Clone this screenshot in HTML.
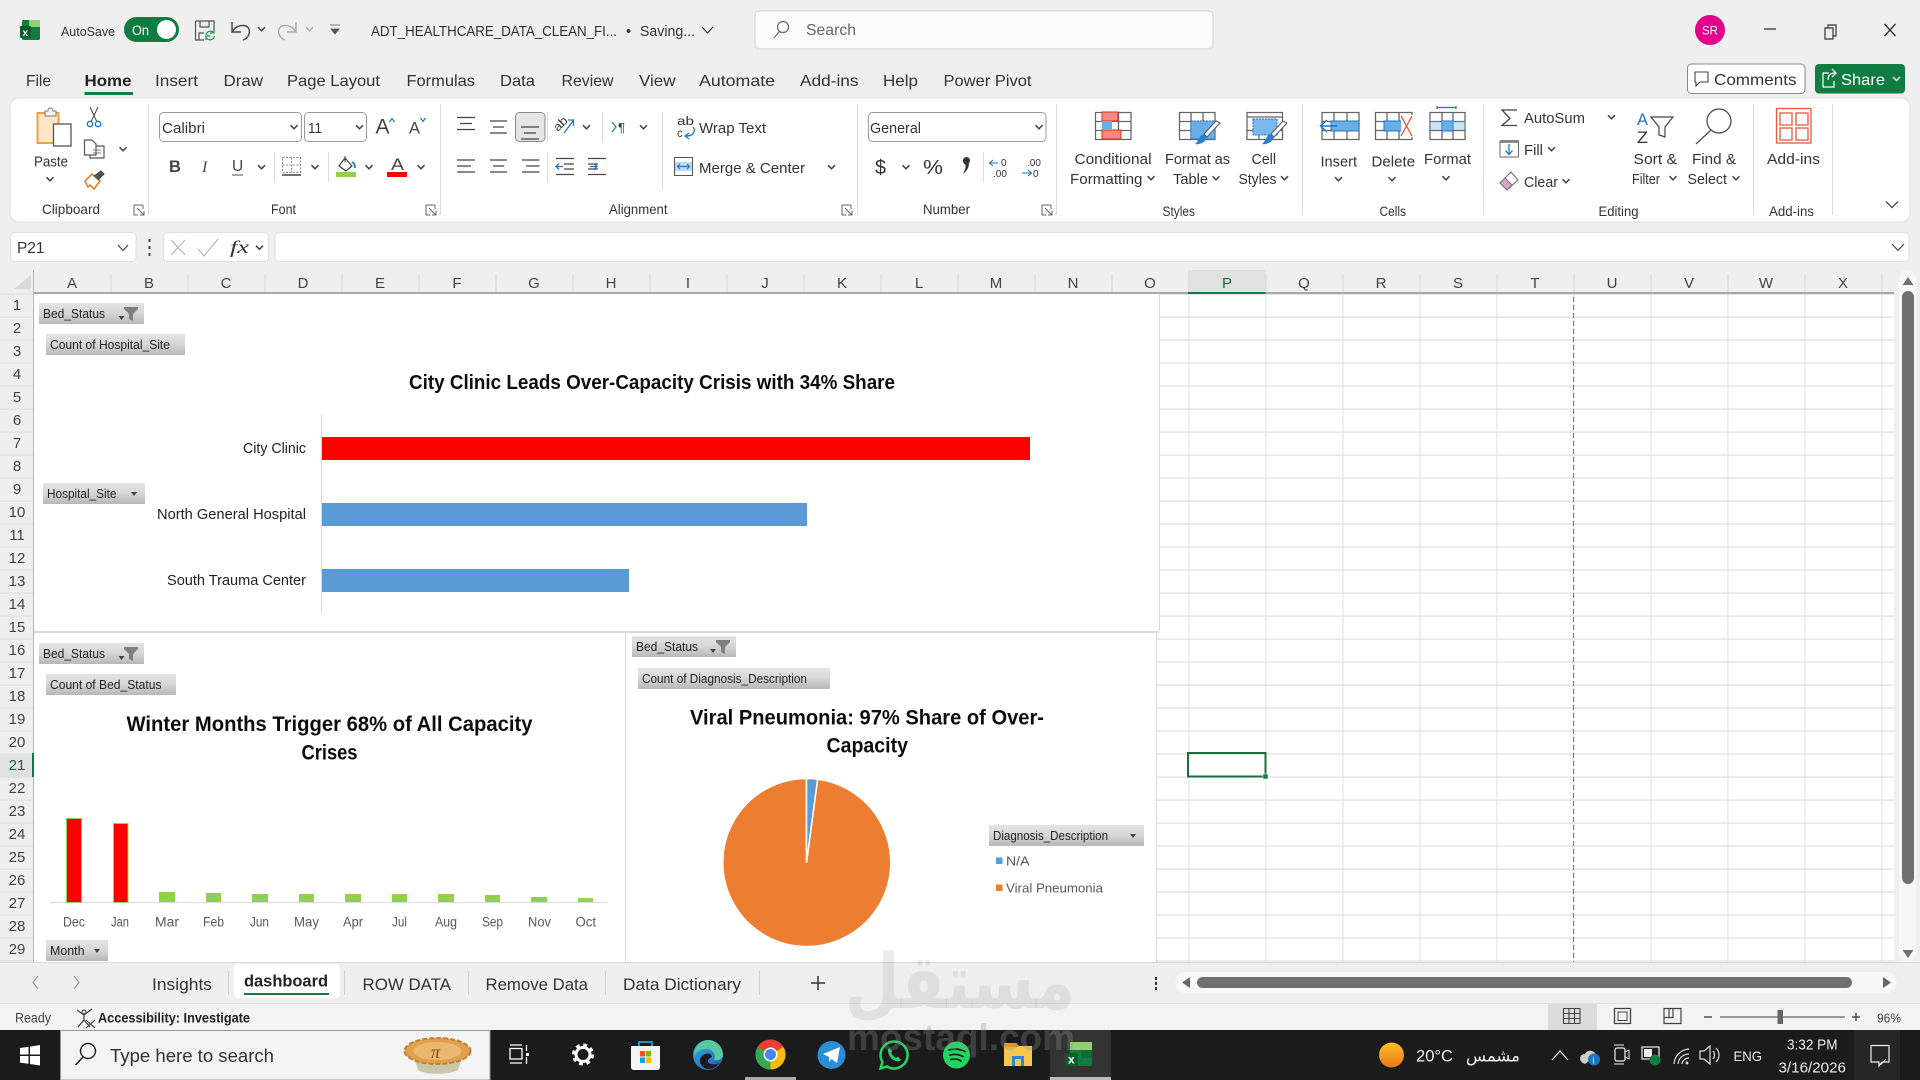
<!DOCTYPE html>
<html lang="en"><head><meta charset="utf-8"><title>Excel dashboard</title>
<style>
html,body{margin:0;padding:0;background:#efefef;width:1920px;height:1080px;overflow:hidden}
svg{display:block}
text{font-family:"Liberation Sans","DejaVu Sans",sans-serif;fill:#333;white-space:pre}
.ic{fill:none;stroke:#555;stroke-width:1.3}
</style></head><body>
<svg width="1920" height="1080" viewBox="0 0 1920 1080" xmlns="http://www.w3.org/2000/svg">
<defs>
<path id="ch" d="M-3.5 -1.8L0 1.8L3.5 -1.8" fill="none" stroke="#444" stroke-width="1.5"/>
<path id="launch" d="M-5 -5H4M-5 -5V5M-5 5H-1M4 -5V-1M-2 -2L5 5M5 1V5H1" fill="none" stroke="#666" stroke-width="1"/>
<linearGradient id="g" x1="0" y1="0" x2="0" y2="1"><stop offset="0" stop-color="#e4e4e4"/><stop offset=".45" stop-color="#d8d8d8"/><stop offset="1" stop-color="#b8b8b8"/></linearGradient>
<linearGradient id="sun" x1="0" y1="0" x2="0" y2="1"><stop offset="0" stop-color="#fbbf24"/><stop offset="1" stop-color="#e8791c"/></linearGradient>
<linearGradient id="edge" x1="0" y1="0" x2="1" y2="1"><stop offset="0" stop-color="#2ea8d8"/><stop offset=".6" stop-color="#2a7fc9"/><stop offset="1" stop-color="#1a4f9c"/></linearGradient>
<pattern id="hl" x="0" y="293.5" width="20" height="23" patternUnits="userSpaceOnUse"><rect width="20" height="1.2" fill="#dddddd"/></pattern>
<pattern id="vl" x="33.4" y="0" width="77" height="20" patternUnits="userSpaceOnUse"><rect width="1" height="20" fill="#e0e0e0"/></pattern>
<path id="fun" d="M0 0H14V2L9 7V14L5 12V7L0 2Z" fill="#808080"/>
<path id="car" d="M-3 -2H3L0 2Z" fill="#444"/>
</defs>

<rect width="1920" height="1080" fill="#efefef"/>

<!-- TITLE BAR -->
<rect x="22" y="20" width="18" height="20" rx="1.5" fill="#107c41"/><rect x="29" y="20" width="11" height="7" fill="#8fd16f"/><rect x="20" y="26" width="11" height="12" rx="1" fill="#0b5d2e"/>
<text x="22.5" y="36" font-size="10" font-weight="bold" style="fill:#fff">x</text>
<text x="61" y="36" font-size="13" textLength="54" lengthAdjust="spacingAndGlyphs">AutoSave</text>
<rect x="124" y="17" width="55" height="25" rx="12.5" fill="#107c41"/><text x="132" y="35" font-size="13.5" style="fill:#fff" textLength="17" lengthAdjust="spacingAndGlyphs">On</text><circle cx="166.5" cy="29.5" r="9.5" fill="#fff"/>
<path d="M195.5 21H214V30M195.5 21V40H204M200 21V27H209V21M199 40V33H204" fill="none" stroke="#555" stroke-width="1.2"/><path d="M206 35a4.500 4.500 0 0 1 8-2M214.500 36a4.500 4.500 0 0 1-8 2M214 29v4h-4M206 40v-4h4" fill="none" stroke="#2c9a5b" stroke-width="1.3"/>
<path d="M232 22V32H241M232 32C238 22 252 24 249 34C248 37 246 39 243 40" fill="none" stroke="#444" stroke-width="1.4"/>
<use href="#ch" x="261.500" y="29"/>
<path d="M296 22V32H287M296 32C290 22 276 24 279 34C280 37 282 39 285 40" fill="none" stroke="#aaa" stroke-width="1.4"/>
<use href="#ch" x="309.500" y="29" opacity=".4"/>
<path d="M330 25H340M331 29H339L335 34Z" fill="#555" stroke="#555" stroke-width=".8"/>
<g font-size="14.500">
<text x="371" y="36" textLength="246" lengthAdjust="spacingAndGlyphs">ADT_HEALTHCARE_DATA_CLEAN_FI...</text>
<text x="626" y="36" style="fill:#333">•</text>
<text x="640" y="36" textLength="55" lengthAdjust="spacingAndGlyphs">Saving...</text>
</g>
<path d="M702 27L707.500 33L713 27" fill="none" stroke="#333" stroke-width="1.2"/>
<rect x="755" y="11" width="458" height="38" rx="4" fill="#fbfbfb" stroke="#dcdcdc" stroke-width="1.500"/>
<circle cx="783" cy="27" r="5.500" fill="none" stroke="#666" stroke-width="1.200"/><path d="M779.500 31.500L774 38" stroke="#666" stroke-width="1.200"/>
<text x="806" y="35" font-size="16" style="fill:#666" textLength="50" lengthAdjust="spacingAndGlyphs">Search</text>
<circle cx="1710" cy="30" r="15" fill="#e3008c"/><text x="1710" y="34.500" font-size="11.500" text-anchor="middle" style="fill:#fff">SR</text>
<path d="M1764 29H1776" stroke="#333" stroke-width="1.300"/>
<path d="M1825 28H1833V39H1825ZM1828 28V25H1836V36H1833" fill="none" stroke="#333" stroke-width="1.200"/>
<path d="M1884.500 24L1895.500 36M1895.500 24L1884.500 36" stroke="#333" stroke-width="1.300"/>

<!-- MENU TABS -->
<g font-size="16">
<text x="26" y="86" textLength="25" lengthAdjust="spacingAndGlyphs">File</text>
<text x="84.500" y="86" font-weight="bold" style="fill:#222" textLength="47" lengthAdjust="spacingAndGlyphs">Home</text>
<text x="155" y="86" textLength="43" lengthAdjust="spacingAndGlyphs">Insert</text>
<text x="223.500" y="86" textLength="39.500" lengthAdjust="spacingAndGlyphs">Draw</text>
<text x="287" y="86" textLength="93" lengthAdjust="spacingAndGlyphs">Page Layout</text>
<text x="406.500" y="86" textLength="68.500" lengthAdjust="spacingAndGlyphs">Formulas</text>
<text x="500" y="86" textLength="35" lengthAdjust="spacingAndGlyphs">Data</text>
<text x="561.500" y="86" textLength="52" lengthAdjust="spacingAndGlyphs">Review</text>
<text x="639" y="86" textLength="36.500" lengthAdjust="spacingAndGlyphs">View</text>
<text x="699" y="86" textLength="76" lengthAdjust="spacingAndGlyphs">Automate</text>
<text x="800" y="86" textLength="58.500" lengthAdjust="spacingAndGlyphs">Add-ins</text>
<text x="883" y="86" textLength="35" lengthAdjust="spacingAndGlyphs">Help</text>
<text x="943.500" y="86" textLength="88" lengthAdjust="spacingAndGlyphs">Power Pivot</text>
</g>
<rect x="84.500" y="92" width="48.500" height="3" fill="#107c41"/>
<rect x="1687.500" y="64" width="117.500" height="29.500" rx="4" fill="#fff" stroke="#8a8a8a"/>
<path d="M1695 72H1708V82H1700L1696 86V82H1695Z" fill="none" stroke="#444" stroke-width="1.100"/>
<text x="1714" y="85" font-size="16" textLength="82.500" lengthAdjust="spacingAndGlyphs">Comments</text>
<rect x="1815" y="64" width="90" height="29.500" rx="4" fill="#107c41"/>
<path d="M1829 73H1823V87H1834V81M1828 80C1828 75 1831 73 1835 73M1832 69L1836 73L1832 77" fill="none" stroke="#fff" stroke-width="1.200"/>
<text x="1841" y="85" font-size="16" style="fill:#fff" textLength="44" lengthAdjust="spacingAndGlyphs">Share</text>
<path d="M1893 77L1896.500 80.500L1900 77" fill="none" stroke="#fff" stroke-width="1.300"/>

<!-- RIBBON -->
<rect x="10" y="98" width="1900" height="124" rx="9" fill="#fff" stroke="#e2e2e2"/>
<g stroke="#dcdcdc" stroke-width="1"><path d="M148.500 104V215M440.500 104V215M857.500 104V215M1056.500 104V215M1302.500 104V215M1483.500 104V215M1753.500 104V215M1832.500 104V215M274.500 152V182M328.500 152V182M547.500 152V182M602.500 112V142M662.500 112V190M983.500 152V182M547.500 112V142"/></g>

<!-- clipboard -->
<rect x="37.500" y="113" width="21" height="30" fill="#fde7c6" stroke="#eda23a" stroke-width="2"/>
<path d="M45 114V111H48C48 107 53 107 53 111H56V116H45Z" fill="#f4f4f4" stroke="#777"/>
<rect x="53.500" y="124" width="17.500" height="22" fill="#fff" stroke="#555" stroke-width="1.300"/>
<text x="34" y="166.500" font-size="15" textLength="34" lengthAdjust="spacingAndGlyphs">Paste</text>
<use href="#ch" x="50" y="179"/>
<path d="M90 107L97 122M98 107L91 122" stroke="#444" stroke-width="1"/><circle cx="90" cy="124" r="2.700" fill="none" stroke="#1e74c4" stroke-width="1.300"/><circle cx="98" cy="124" r="2.700" fill="none" stroke="#1e74c4" stroke-width="1.300"/>
<path d="M84.500 140H92L96 144V155H84.500ZM96 146H104V158H90V155" fill="#fff" stroke="#555" stroke-width="1.200"/><path d="M93 150H101M93 153H101" stroke="#777"/>
<use href="#ch" x="123" y="149"/>
<path d="M85 181L92 174L100 181L94 189L90 185L88 187Z" fill="#fff" stroke="#e07a1f" stroke-width="1.500"/><path d="M94 176L101 171L104 174L98 180" fill="#555" stroke="#444"/>
<text x="42" y="214" font-size="14" textLength="58" lengthAdjust="spacingAndGlyphs">Clipboard</text>
<use href="#launch" x="139" y="210"/>

<!-- font -->
<rect x="159.500" y="112.500" width="142" height="29" rx="4" fill="#fff" stroke="#9a9a9a"/>
<text x="162" y="133" font-size="15" textLength="43" lengthAdjust="spacingAndGlyphs">Calibri</text><use href="#ch" x="294" y="127"/>
<rect x="304.500" y="112.500" width="62" height="29" rx="4" fill="#fff" stroke="#9a9a9a"/>
<text x="308" y="133" font-size="15" textLength="14" lengthAdjust="spacingAndGlyphs">11</text><use href="#ch" x="359.500" y="127"/>
<text x="375.500" y="133.500" font-size="21" style="fill:#444" textLength="14" lengthAdjust="spacingAndGlyphs">A</text><path d="M389.500 122L392 118.500L394.500 122" fill="none" stroke="#1e74c4" stroke-width="1.200"/>
<text x="409" y="133.500" font-size="17" style="fill:#444" textLength="11" lengthAdjust="spacingAndGlyphs">A</text><path d="M420.500 118L423 121.500L425.500 118" fill="none" stroke="#1e74c4" stroke-width="1.200"/>
<text x="169" y="172" font-size="16.500" font-weight="bold" style="fill:#444">B</text>
<text x="202" y="172" font-size="16" font-style="italic" style="font-family:'Liberation Serif',serif;fill:#444">I</text>
<text x="232" y="171" font-size="15.500" style="fill:#444">U</text><path d="M232 175H243" stroke="#777" stroke-width="1.300"/>
<use href="#ch" x="261.500" y="167"/>
<path d="M282.500 157.500H300.500V172.500H282.500ZM291.500 157.500V172.500M282.500 165H300.500" fill="none" stroke="#888" stroke-dasharray="2 1.500"/><path d="M282 175H301" stroke="#444" stroke-width="1.500"/>
<use href="#ch" x="315" y="167"/>
<path d="M339 166L345 158L352 166L346 171Z" fill="#fff" stroke="#444" stroke-width="1.200"/><path d="M345 156V162" fill="none" stroke="#444"/><path d="M352 162C354 163 355 165 355 168" fill="none" stroke="#1e74c4" stroke-width="1.800"/>
<rect x="336" y="172" width="20" height="5" fill="#92d050"/>
<use href="#ch" x="369" y="167"/>
<text x="391" y="170" font-size="17" style="fill:#444" textLength="13" lengthAdjust="spacingAndGlyphs">A</text><rect x="387" y="172" width="20" height="5" fill="#f00"/>
<use href="#ch" x="421" y="167"/>
<text x="271" y="214" font-size="14" textLength="25" lengthAdjust="spacingAndGlyphs">Font</text>
<use href="#launch" x="431" y="210"/>

<!-- alignment -->
<rect x="515.500" y="112.500" width="29.500" height="29" rx="4" fill="#e6e6e6" stroke="#8a8a8a"/>
<g stroke="#444" stroke-width="1.300" fill="none">
<path d="M457 117.500H475M460 123.500H472M457 129.500H475"/>
<path d="M490 121H507M493 127H504M490 133H507"/>
<path d="M521 127H539M524 133H536M521 139H539"/>
<path d="M457 160H475M457 166H471M457 172H475"/>
<path d="M490 160H507M493 166H504M490 172H507"/>
<path d="M522 160H539.500M526 166H539.500M522 172H539.500"/>
<path d="M556 158.500H574M564 164H574M564 169H574M556 174.500H574"/>
<path d="M588 158.500H606M588 164H598M588 169H598M588 174.500H606"/>
</g>
<path d="M563 166.500H556M559 163.500L556 166.500L559 169.500M590 166.500H597M594 163.500L597 166.500L594 169.500" fill="none" stroke="#1e74c4" stroke-width="1.300"/>
<text x="555" y="129" font-size="12" transform="rotate(-45 560 127)" textLength="15" lengthAdjust="spacingAndGlyphs">ab</text>
<path d="M564 133L573 121M568 120H573.500V126" fill="none" stroke="#1e74c4" stroke-width="1.300"/>
<use href="#ch" x="586.500" y="127"/>
<path d="M612 122L616 127L612 132" fill="none" stroke="#1e74c4" stroke-width="1.200"/>
<text x="618" y="132" font-size="13">¶</text>
<use href="#ch" x="643.500" y="127"/>
<text x="677" y="125" font-size="11.500" textLength="17" lengthAdjust="spacingAndGlyphs">ab</text><text x="677" y="137" font-size="11.500">c</text>
<path d="M693 127C696 131 694 136 686 136M689 133L685 136L689 139" fill="none" stroke="#1e74c4" stroke-width="1.200"/>
<text x="699" y="133" font-size="15" textLength="67" lengthAdjust="spacingAndGlyphs">Wrap Text</text>
<rect x="674.500" y="157.500" width="18" height="18" fill="#fff" stroke="#555"/><rect x="675" y="162" width="17" height="9" fill="#bcd9f4"/><path d="M678 166.500H689M680 164L677.500 166.500L680 169M687 164L689.500 166.500L687 169" fill="none" stroke="#1e74c4" stroke-width="1.200"/>
<text x="699" y="173" font-size="15" textLength="106" lengthAdjust="spacingAndGlyphs">Merge &amp; Center</text>
<use href="#ch" x="831.500" y="167"/>
<text x="609" y="214" font-size="14" textLength="58.500" lengthAdjust="spacingAndGlyphs">Alignment</text>
<use href="#launch" x="847" y="210"/>

<!-- number -->
<rect x="868.500" y="112.500" width="177.500" height="29" rx="4" fill="#fff" stroke="#9a9a9a"/>
<text x="870" y="133" font-size="15" textLength="51" lengthAdjust="spacingAndGlyphs">General</text><use href="#ch" x="1039" y="127"/>
<text x="875" y="174" font-size="20" textLength="11" lengthAdjust="spacingAndGlyphs">$</text><use href="#ch" x="906" y="167"/>
<text x="923" y="174" font-size="20" textLength="20" lengthAdjust="spacingAndGlyphs">%</text>
<path d="M963 160.500a3.500 3.500 0 1 1 6 2.500C969 167 967 171 963 174C965 170 966 167 965.500 164.500C964 164.500 963 162.500 963 160.500Z" fill="#333"/>
<text x="1001" y="166" font-size="10">0</text><text x="993" y="177" font-size="10">.00</text><path d="M998 163H990M993 160L989.500 163L993 166" fill="none" stroke="#1e74c4" stroke-width="1.100"/>
<text x="1027" y="166" font-size="10">.00</text><text x="1033" y="177" font-size="10">0</text><path d="M1022 173H1031M1028 170L1031.500 173L1028 176" fill="none" stroke="#1e74c4" stroke-width="1.100"/>
<text x="923" y="214" font-size="14" textLength="47" lengthAdjust="spacingAndGlyphs">Number</text>
<use href="#launch" x="1047" y="210"/>

<!-- styles icons -->
<g fill="none" stroke="#666" stroke-width="1.300">
<path d="M1095.500 112.500H1131V139.500H1095.500ZM1095.500 121.500H1131M1095.500 130.500H1131M1107 112.500V139.500M1118.500 112.500V139.500"/>
<path d="M1179.500 112.500H1215V139.500H1179.500ZM1179.500 121.500H1215M1179.500 130.500H1215M1191 112.500V139.500M1203 112.500V139.500"/>
<path d="M1247 112.500H1282.500V139.500H1247ZM1247 130.500H1282.500M1259 130.500V139.500M1271 130.500V139.500M1247 117H1282.500"/>
</g>
<rect x="1102" y="112" width="16" height="9" fill="#f28b82" stroke="#d92b20"/><rect x="1102" y="130" width="19" height="9" fill="#f28b82" stroke="#d92b20"/><rect x="1102" y="121" width="10" height="9" fill="#6aaee8"/>
<rect x="1191" y="121" width="24" height="18" fill="#6aaee8"/><rect x="1191" y="121" width="24" height="18" fill="none" stroke="#1e74c4" stroke-dasharray="2 1"/>
<rect x="1253" y="119" width="24" height="16" fill="#7ab8ee" stroke="#1e74c4" stroke-dasharray="2 1"/>
<path d="M1216 121L1220 123L1207 137L1204 134Z" fill="#fff" stroke="#555"/><path d="M1204 134L1207 137C1206 142 1200 145 1195 144C1199 141 1199 135 1204 134Z" fill="#2b82cc"/>
<path d="M1283 121L1287 123L1274 137L1271 134Z" fill="#fff" stroke="#555"/><path d="M1271 134L1274 137C1273 142 1267 145 1262 144C1266 141 1266 135 1271 134Z" fill="#2b82cc"/>
<g font-size="15">
<text x="1074.500" y="164" textLength="77" lengthAdjust="spacingAndGlyphs">Conditional</text>
<text x="1070" y="184" textLength="72.500" lengthAdjust="spacingAndGlyphs">Formatting</text>
<text x="1165" y="164" textLength="65" lengthAdjust="spacingAndGlyphs">Format as</text>
<text x="1173" y="184" textLength="35" lengthAdjust="spacingAndGlyphs">Table</text>
<text x="1251.500" y="164" textLength="24.500" lengthAdjust="spacingAndGlyphs">Cell</text>
<text x="1238.500" y="184" textLength="38" lengthAdjust="spacingAndGlyphs">Styles</text>
<text x="1320.500" y="166.500" textLength="36.500" lengthAdjust="spacingAndGlyphs">Insert</text>
<text x="1371.500" y="166.500" textLength="43.500" lengthAdjust="spacingAndGlyphs">Delete</text>
<text x="1424" y="164" textLength="47" lengthAdjust="spacingAndGlyphs">Format</text>
<text x="1524" y="123" textLength="61" lengthAdjust="spacingAndGlyphs">AutoSum</text>
<text x="1524" y="155" textLength="19" lengthAdjust="spacingAndGlyphs">Fill</text>
<text x="1524" y="187" textLength="34" lengthAdjust="spacingAndGlyphs">Clear</text>
<text x="1633.500" y="164" textLength="43.500" lengthAdjust="spacingAndGlyphs">Sort &amp;</text>
<text x="1632" y="184" textLength="28" lengthAdjust="spacingAndGlyphs">Filter</text>
<text x="1692" y="164" textLength="44" lengthAdjust="spacingAndGlyphs">Find &amp;</text>
<text x="1687.500" y="184" textLength="39.500" lengthAdjust="spacingAndGlyphs">Select</text>
<text x="1767" y="164" textLength="53" lengthAdjust="spacingAndGlyphs">Add-ins</text>
</g>
<use href="#ch" x="1151" y="178"/><use href="#ch" x="1216" y="178"/><use href="#ch" x="1284.500" y="178"/>
<use href="#ch" x="1338.500" y="179"/><use href="#ch" x="1392" y="179"/><use href="#ch" x="1446" y="178"/>
<use href="#ch" x="1611.500" y="117"/><use href="#ch" x="1551.500" y="149"/><use href="#ch" x="1566" y="181"/><use href="#ch" x="1673" y="178"/><use href="#ch" x="1736" y="178"/>
<g font-size="14">
<text x="1162.500" y="216" textLength="32.500" lengthAdjust="spacingAndGlyphs">Styles</text>
<text x="1379.500" y="216" textLength="26.500" lengthAdjust="spacingAndGlyphs">Cells</text>
<text x="1598.500" y="216" textLength="40" lengthAdjust="spacingAndGlyphs">Editing</text>
<text x="1769" y="216" textLength="45" lengthAdjust="spacingAndGlyphs">Add-ins</text>
</g>

<!-- cells icons -->
<g fill="none" stroke="#666" stroke-width="1.300">
<path d="M1322 112.500H1359V139.500H1322ZM1322 121.500H1359M1322 130.500H1359M1334 112.500V139.500M1347 112.500V139.500"/>
<path d="M1375.500 112.500H1412V139.500H1375.500ZM1375.500 121.500H1412M1375.500 130.500H1412M1387 112.500V139.500M1399 112.500V139.500"/>
<path d="M1430 112.500H1465V139.500H1430ZM1430 121.500H1465M1430 130.500H1465M1442 112.500V139.500M1453 112.500V139.500"/>
</g>
<rect x="1331" y="121" width="28" height="10" fill="#6aaee8" stroke="#1e74c4"/><path d="M1337 126H1321M1327 120L1320.500 126L1327 132" fill="#fff" stroke="#1e74c4" stroke-width="1.500"/>
<rect x="1384" y="121" width="19" height="10" fill="#6aaee8" stroke="#1e74c4"/><rect x="1401" y="115" width="12" height="22" fill="#fff"/><path d="M1401 116L1412 136M1412 116L1401 136" stroke="#e8583a" stroke-width="1.300"/>
<rect x="1442" y="121" width="11" height="10" fill="#6aaee8" stroke="#1e74c4"/><rect x="1430" y="121" width="35" height="9" fill="#6aaee8" opacity=".35"/><path d="M1437 107.500H1456M1437 106V109M1456 106V109" stroke="#1e74c4" stroke-width="1.200" fill="none"/>

<!-- editing icons -->
<path d="M1517 110H1502L1510 118.500L1502 125.500H1517" fill="none" stroke="#444" stroke-width="1.300"/>
<rect x="1500" y="141" width="18.500" height="16" fill="#fff" stroke="#666"/><rect x="1500" y="140" width="18.500" height="3" fill="#888"/><path d="M1509 144V154M1505.500 150.500L1509 154.500L1512.500 150.500" fill="none" stroke="#1e74c4" stroke-width="1.300"/>
<path d="M1500 183L1511 172L1518 180L1507 190Z" fill="#fff" stroke="#777" stroke-width="1.200"/><path d="M1500 183L1505 178L1512 185L1507 190Z" fill="#d9a5c4" stroke="#777"/>
<text x="1637" y="125" font-size="17" style="fill:#1e74c4" textLength="11" lengthAdjust="spacingAndGlyphs">A</text>
<text x="1637" y="143" font-size="17" textLength="11" lengthAdjust="spacingAndGlyphs">Z</text>
<path d="M1651 117H1673L1665 127V137L1659 135V127Z" fill="none" stroke="#444" stroke-width="1.200"/>
<circle cx="1719" cy="121" r="12" fill="none" stroke="#444" stroke-width="1.200"/><path d="M1711 130L1696 144" stroke="#444" stroke-width="1.200"/>
<g fill="none" stroke="#e8583a" stroke-width="1.300"><rect x="1776.500" y="108.500" width="34.500" height="34.500"/><rect x="1780" y="113" width="12" height="12"/><rect x="1796" y="113" width="12" height="12"/><rect x="1780" y="128" width="12" height="12"/><rect x="1796" y="128" width="12" height="12"/></g>
<path d="M1886 201.500L1892 207.500L1898 201.500" fill="none" stroke="#333" stroke-width="1.200"/>

<!-- FORMULA BAR -->
<rect x="10.500" y="232.500" width="125.500" height="29" rx="4" fill="#fff" stroke="#dedede"/>
<text x="17" y="253" font-size="16" textLength="27.500" lengthAdjust="spacingAndGlyphs">P21</text>
<path d="M118 245L123 250.500L128 245" fill="none" stroke="#444" stroke-width="1.200"/>
<path d="M149.500 239V242M149.500 246V249M149.500 253V256" stroke="#444" stroke-width="2"/>
<rect x="163.500" y="232.500" width="105" height="29" rx="4" fill="#fff" stroke="#dedede"/>
<path d="M171 240L185 255M185 240L171 255" stroke="#b5b5b5" stroke-width="1.200"/><path d="M198 249L204 256L218 239" fill="none" stroke="#b5b5b5" stroke-width="1.200"/>
<text x="230" y="253" font-size="18" font-style="italic" style="font-family:'Liberation Serif',serif;fill:#333" textLength="19" lengthAdjust="spacingAndGlyphs">fx</text>
<use href="#ch" x="259.500" y="247.500"/>
<rect x="275" y="232.500" width="1634" height="29" rx="4" fill="#fff" stroke="#dedede"/>
<path d="M1892 244L1898 250.500L1904 244" fill="none" stroke="#444" stroke-width="1.200"/>

<!-- SHEET -->
<rect x="34" y="294" width="1860" height="668" fill="#fff"/>
<rect x="1159.500" y="294" width="734.500" height="337" fill="url(#hl)"/>
<rect x="1157" y="631" width="737" height="331" fill="url(#hl)"/>
<rect x="1159" y="294" width="735" height="668" fill="url(#vl)"/>
<rect x="34" y="631" width="1125" height="2" fill="#dcdcdc"/>
<rect x="1188" y="270" width="77.500" height="23" fill="#e1e1e1"/>
<path d="M111 274V293M188 274V293M265 274V293M342 274V293M419 274V293M496 274V293M573 274V293M650 274V293M727 274V293M804 274V293M881 274V293M958 274V293M1035 274V293M1112 274V293M1189 274V293M1266 274V293M1343 274V293M1420 274V293M1497 274V293M1574 274V293M1651 274V293M1728 274V293M1805 274V293M1882 274V293" stroke="#dadada"/>
<path d="M14 289L31 289L31 275Z" fill="#d9d9d9"/>
<rect x="33" y="292" width="1861" height="2" fill="#a8a8a8"/>
<rect x="1188" y="292" width="77.500" height="2" fill="#107c41"/>
<rect x="33" y="270" width="1" height="692" fill="#b4b4b4"/>
<rect x="0" y="293.500" width="33" height="668.500" fill="url(#hl)" opacity=".9"/>
<rect x="0" y="753.500" width="33" height="23" fill="#e1e1e1"/><rect x="32" y="753" width="2" height="24" fill="#107c41"/>
<g font-size="15" text-anchor="middle" style="fill:#444">
<text x="72" y="288" style="fill:#444">A</text><text x="149" y="288" style="fill:#444">B</text><text x="226" y="288" style="fill:#444">C</text><text x="303" y="288" style="fill:#444">D</text><text x="380" y="288" style="fill:#444">E</text><text x="457" y="288" style="fill:#444">F</text><text x="534" y="288" style="fill:#444">G</text><text x="611" y="288" style="fill:#444">H</text><text x="688" y="288" style="fill:#444">I</text><text x="765" y="288" style="fill:#444">J</text><text x="842" y="288" style="fill:#444">K</text><text x="919" y="288" style="fill:#444">L</text><text x="996" y="288" style="fill:#444">M</text><text x="1073" y="288" style="fill:#444">N</text><text x="1150" y="288" style="fill:#444">O</text><text x="1227" y="288" style="fill:#1a6b3d">P</text><text x="1304" y="288" style="fill:#444">Q</text><text x="1381" y="288" style="fill:#444">R</text><text x="1458" y="288" style="fill:#444">S</text><text x="1535" y="288" style="fill:#444">T</text><text x="1612" y="288" style="fill:#444">U</text><text x="1689" y="288" style="fill:#444">V</text><text x="1766" y="288" style="fill:#444">W</text><text x="1843" y="288" style="fill:#444">X</text>
</g>
<g font-size="15" text-anchor="middle">
<text x="17" y="310" style="fill:#444">1</text><text x="17" y="333" style="fill:#444">2</text><text x="17" y="356" style="fill:#444">3</text><text x="17" y="379" style="fill:#444">4</text><text x="17" y="402" style="fill:#444">5</text><text x="17" y="425" style="fill:#444">6</text><text x="17" y="448" style="fill:#444">7</text><text x="17" y="471" style="fill:#444">8</text><text x="17" y="494" style="fill:#444">9</text><text x="17" y="517" style="fill:#444">10</text><text x="17" y="540" style="fill:#444">11</text><text x="17" y="563" style="fill:#444">12</text><text x="17" y="586" style="fill:#444">13</text><text x="17" y="609" style="fill:#444">14</text><text x="17" y="632" style="fill:#444">15</text><text x="17" y="655" style="fill:#444">16</text><text x="17" y="678" style="fill:#444">17</text><text x="17" y="701" style="fill:#444">18</text><text x="17" y="724" style="fill:#444">19</text><text x="17" y="747" style="fill:#444">20</text><text x="17" y="770" style="fill:#1a6b3d">21</text><text x="17" y="793" style="fill:#444">22</text><text x="17" y="816" style="fill:#444">23</text><text x="17" y="839" style="fill:#444">24</text><text x="17" y="862" style="fill:#444">25</text><text x="17" y="885" style="fill:#444">26</text><text x="17" y="908" style="fill:#444">27</text><text x="17" y="931" style="fill:#444">28</text><text x="17" y="954" style="fill:#444">29</text>
</g>
<path d="M1573.500 297V962" stroke="#777" stroke-dasharray="5 3"/>

<!-- chart borders -->
<path d="M1159.500 294V631M34 632H1159M625.500 633V962M1156.500 633V962" fill="none" stroke="#d9d9d9" stroke-width="1"/>

<!-- TOP CHART -->
<rect x="39" y="303" width="105" height="21" fill="url(#g)"/>
<text x="43" y="318" font-size="13" style="fill:#222" textLength="62" lengthAdjust="spacingAndGlyphs">Bed_Status</text>
<use href="#car" x="121.500" y="318"/><use href="#fun" x="124" y="307"/>
<rect x="46" y="334" width="139" height="21" fill="url(#g)"/>
<text x="50" y="349" font-size="13" style="fill:#222" textLength="120" lengthAdjust="spacingAndGlyphs">Count of Hospital_Site</text>
<text x="409" y="389" font-size="20" font-weight="bold" style="fill:#0d0d0d" textLength="486" lengthAdjust="spacingAndGlyphs">City Clinic Leads Over-Capacity Crisis with 34% Share</text>
<rect x="43" y="483" width="102" height="21" fill="url(#g)"/>
<text x="47" y="498" font-size="13" style="fill:#222" textLength="69.500" lengthAdjust="spacingAndGlyphs">Hospital_Site</text>
<use href="#car" x="134" y="494"/>
<path d="M321.500 415V613" stroke="#d9d9d9"/>
<rect x="322" y="437" width="708" height="23" fill="#f00"/>
<rect x="322" y="503" width="485" height="23" fill="#5b9bd5"/>
<rect x="322" y="569" width="307" height="23" fill="#5b9bd5"/>
<g font-size="15">
<text x="243" y="453" style="fill:#222" textLength="63" lengthAdjust="spacingAndGlyphs">City Clinic</text>
<text x="157" y="519" style="fill:#222" textLength="149" lengthAdjust="spacingAndGlyphs">North General Hospital</text>
<text x="167" y="585" style="fill:#222" textLength="139" lengthAdjust="spacingAndGlyphs">South Trauma Center</text>
</g>

<!-- LEFT CHART -->
<rect x="39" y="643" width="105" height="21" fill="url(#g)"/>
<text x="43" y="658" font-size="13" style="fill:#222" textLength="62" lengthAdjust="spacingAndGlyphs">Bed_Status</text>
<use href="#car" x="121.500" y="658"/><use href="#fun" x="124" y="647"/>
<rect x="46" y="674" width="130" height="21" fill="url(#g)"/>
<text x="50" y="689" font-size="13" style="fill:#222" textLength="111.500" lengthAdjust="spacingAndGlyphs">Count of Bed_Status</text>
<text x="126.500" y="731" font-size="21" font-weight="bold" style="fill:#0d0d0d" textLength="406" lengthAdjust="spacingAndGlyphs">Winter Months Trigger 68% of All Capacity</text>
<text x="301.500" y="759.500" font-size="21" font-weight="bold" style="fill:#0d0d0d" textLength="56" lengthAdjust="spacingAndGlyphs">Crises</text>
<path d="M50 902.500H608" stroke="#d9d9d9"/>
<g fill="#92d050">
<rect x="66.500" y="818.500" width="15" height="84" fill="#f00" stroke="#92d050"/>
<rect x="113.500" y="823.500" width="14.500" height="79" fill="#f00" stroke="#92d050"/>
<rect x="159" y="892" width="16" height="10"/><rect x="206" y="893" width="15" height="9"/><rect x="252" y="894" width="16" height="8"/><rect x="299" y="894" width="15" height="8"/><rect x="345" y="894" width="16" height="8"/><rect x="392" y="894" width="15" height="8"/><rect x="438" y="894" width="16" height="8"/><rect x="485" y="895" width="15" height="7"/><rect x="531" y="897" width="16" height="5"/><rect x="578" y="898" width="15" height="4"/>
</g>
<g font-size="13.500">
<text x="63" y="926.500" style="fill:#595959" textLength="22" lengthAdjust="spacingAndGlyphs">Dec</text>
<text x="111" y="926.500" style="fill:#595959" textLength="18" lengthAdjust="spacingAndGlyphs">Jan</text>
<text x="155" y="926.500" style="fill:#595959" textLength="24" lengthAdjust="spacingAndGlyphs">Mar</text>
<text x="203" y="926.500" style="fill:#595959" textLength="21" lengthAdjust="spacingAndGlyphs">Feb</text>
<text x="250" y="926.500" style="fill:#595959" textLength="19" lengthAdjust="spacingAndGlyphs">Jun</text>
<text x="294" y="926.500" style="fill:#595959" textLength="25" lengthAdjust="spacingAndGlyphs">May</text>
<text x="343" y="926.500" style="fill:#595959" textLength="20" lengthAdjust="spacingAndGlyphs">Apr</text>
<text x="392" y="926.500" style="fill:#595959" textLength="15" lengthAdjust="spacingAndGlyphs">Jul</text>
<text x="435" y="926.500" style="fill:#595959" textLength="22" lengthAdjust="spacingAndGlyphs">Aug</text>
<text x="482" y="926.500" style="fill:#595959" textLength="21" lengthAdjust="spacingAndGlyphs">Sep</text>
<text x="528" y="926.500" style="fill:#595959" textLength="23" lengthAdjust="spacingAndGlyphs">Nov</text>
<text x="575.500" y="926.500" style="fill:#595959" textLength="20.500" lengthAdjust="spacingAndGlyphs">Oct</text>
</g>
<rect x="46" y="940" width="62" height="21" fill="url(#g)"/>
<text x="50" y="955" font-size="13" style="fill:#222" textLength="34.500" lengthAdjust="spacingAndGlyphs">Month</text>
<use href="#car" x="97" y="951"/>

<!-- RIGHT CHART -->
<rect x="632" y="636" width="104" height="21" fill="url(#g)"/>
<text x="636" y="651" font-size="13" style="fill:#222" textLength="62" lengthAdjust="spacingAndGlyphs">Bed_Status</text>
<use href="#car" x="713" y="651"/><use href="#fun" x="716" y="640"/>
<rect x="638" y="668" width="192" height="21" fill="url(#g)"/>
<text x="642" y="683" font-size="13" style="fill:#222" textLength="165" lengthAdjust="spacingAndGlyphs">Count of Diagnosis_Description</text>
<text x="690" y="724.500" font-size="21" font-weight="bold" style="fill:#0d0d0d" textLength="354" lengthAdjust="spacingAndGlyphs">Viral Pneumonia: 97% Share of Over-</text>
<text x="826.500" y="752.500" font-size="21" font-weight="bold" style="fill:#0d0d0d" textLength="81.500" lengthAdjust="spacingAndGlyphs">Capacity</text>
<path d="M806.500 862.500L817.600 779.200A84 84 0 1 1 806.500 778.500Z" fill="#ed7d31" stroke="#fff" stroke-width="1.500"/>
<path d="M806.500 862.500V778.500A84 84 0 0 1 817.600 779.200Z" fill="#5b9bd5" stroke="#fff" stroke-width="1.500"/>
<rect x="989" y="825" width="155" height="21" fill="url(#g)"/>
<text x="993" y="840" font-size="13" style="fill:#222" textLength="115" lengthAdjust="spacingAndGlyphs">Diagnosis_Description</text>
<use href="#car" x="1133" y="836"/>
<rect x="996" y="857.500" width="6.500" height="6.500" fill="#5b9bd5"/><rect x="996" y="884.500" width="6.500" height="6.500" fill="#ed7d31"/>
<text x="1006" y="865.500" font-size="13" style="fill:#595959" textLength="23.500" lengthAdjust="spacingAndGlyphs">N/A</text>
<text x="1006" y="892.500" font-size="13" style="fill:#595959" textLength="97" lengthAdjust="spacingAndGlyphs">Viral Pneumonia</text>

<!-- selected cell -->
<rect x="1188" y="753" width="77.500" height="23.500" fill="none" stroke="#1b6e3c" stroke-width="2"/>
<rect x="1263" y="774" width="5" height="5" fill="#107c41" stroke="#fff" stroke-width=".5"/>

<!-- v scrollbar -->
<rect x="1899" y="270" width="17" height="692" rx="8" fill="#f7f7f7"/>
<path d="M1908 277L1913.500 285H1902.500Z" fill="#707070"/>
<rect x="1902" y="291" width="12" height="593" rx="6" fill="#707070"/>
<path d="M1902.500 950H1913.500L1908 958Z" fill="#707070"/>

<!-- SHEET TABS -->
<rect x="0" y="962" width="1920" height="41" fill="#efefef"/><rect x="0" y="962" width="1920" height="1" fill="#d8d8d8"/>
<path d="M38 976L33 982.500L38 989M74 976L79 982.500L74 989" fill="none" stroke="#9a9a9a" stroke-width="1.100"/>
<rect x="234" y="964" width="106" height="34" rx="4" fill="#fff"/>
<path d="M228.500 971V995M344.500 971V995M468.500 971V995M605.500 971V995M759.500 971V995" stroke="#cfcfcf"/>
<g font-size="17">
<text x="152" y="990" textLength="60" lengthAdjust="spacingAndGlyphs">Insights</text>
<text x="244" y="986.500" font-weight="bold" style="fill:#222" textLength="84" lengthAdjust="spacingAndGlyphs">dashboard</text>
<text x="362.500" y="990" textLength="88.500" lengthAdjust="spacingAndGlyphs">ROW DATA</text>
<text x="485.500" y="990" textLength="102.500" lengthAdjust="spacingAndGlyphs">Remove Data</text>
<text x="623" y="990" textLength="118" lengthAdjust="spacingAndGlyphs">Data Dictionary</text>
</g>
<rect x="244" y="993" width="85" height="2" fill="#107c41"/>
<path d="M818 976V990M811 983H825" stroke="#333" stroke-width="1.500"/>
<path d="M1156 977V980M1156 982V985M1156 987V990" stroke="#333" stroke-width="2"/>
<rect x="1175.500" y="972" width="721" height="21" rx="10" fill="#f8f8f8"/>
<path d="M1182 982.500L1190 977V988Z" fill="#666"/><rect x="1197" y="977" width="655" height="11" rx="5.500" fill="#707070"/><path d="M1891 982.500L1883 977V988Z" fill="#666"/>

<!-- STATUS BAR -->
<rect x="0" y="1003" width="1920" height="27" fill="#f3f3f3"/><rect x="0" y="1003" width="1920" height="1" fill="#e0e0e0"/>
<text x="15" y="1022.500" font-size="13.500" style="fill:#444" textLength="36" lengthAdjust="spacingAndGlyphs">Ready</text>
<circle cx="84" cy="1012" r="2" fill="none" stroke="#333"/><path d="M77 1010L84 1015L92 1009M84 1015V1020L78 1027M84 1020L90 1027M86 1020L95 1028M95 1020L86 1028" fill="none" stroke="#333" stroke-width="1.100"/>
<text x="98" y="1022.500" font-size="13.500" font-weight="bold" style="fill:#222" textLength="152" lengthAdjust="spacingAndGlyphs">Accessibility: Investigate</text>
<rect x="1548" y="1004" width="49" height="26" fill="#dcdcdc"/>
<path d="M1563.500 1008.500H1580V1023.500H1563.500ZM1563.500 1013.500H1580M1563.500 1018.500H1580M1569 1008.500V1023.500M1574.500 1008.500V1023.500" fill="none" stroke="#444" stroke-width="1.100"/>
<path d="M1614.500 1008.500H1630.500V1023.500H1614.500Z" fill="none" stroke="#444" stroke-width="1.300"/><rect x="1618" y="1012" width="9" height="8.500" fill="none" stroke="#444"/>
<path d="M1664 1008.500H1681V1023.500H1664ZM1664 1017.500H1673V1008.500M1669 1008.500V1017.500" fill="none" stroke="#444" stroke-width="1.200"/>
<path d="M1704 1017H1712M1852 1017H1860M1856 1013V1021" stroke="#333" stroke-width="1.200"/>
<path d="M1720 1017H1845" stroke="#666" stroke-width="1.300"/><rect x="1777.500" y="1010" width="5.500" height="14" fill="#666"/>
<text x="1877" y="1022.500" font-size="13" style="fill:#444" textLength="24" lengthAdjust="spacingAndGlyphs">96%</text>

<!-- TASKBAR -->
<rect x="0" y="1030" width="1920" height="50" fill="#1b1b1b"/>
<path d="M20 1048L28.500 1046.800V1054.500H20ZM30 1046.600L40 1045V1054.500H30ZM20 1056H28.500V1063.800L20 1062.600ZM30 1056H40V1065.500L30 1064Z" fill="#fff"/>
<rect x="60.500" y="1030.500" width="429.500" height="49.500" fill="#f3f3f3" stroke="#9a9a9a"/>
<circle cx="88" cy="1051" r="7.500" fill="none" stroke="#222" stroke-width="1.400"/><path d="M83 1057L75.500 1065" stroke="#222" stroke-width="1.500"/>
<text x="110" y="1062" font-size="18" style="fill:#333" textLength="164" lengthAdjust="spacingAndGlyphs">Type here to search</text>
<path d="M413 1055L418 1070C425 1075 450 1075 458 1070L463 1055Z" fill="#c9c7a8"/>
<ellipse cx="437.500" cy="1051" rx="33" ry="13" fill="#e0a052" stroke="#c47f32" stroke-width="2" stroke-dasharray="5 2"/>
<ellipse cx="437.500" cy="1051" rx="24" ry="9" fill="#eab96f"/>
<text x="431" y="1058" font-size="18" font-style="italic" style="font-family:'Liberation Serif',serif;fill:#8a3c16">π</text>
<!-- task view -->
<path d="M510 1045H522M510 1048.500H522V1059H510ZM510 1063H522M526.500 1045V1051M526.500 1057V1064" fill="none" stroke="#fff" stroke-width="1.300"/><rect x="526" y="1053" width="3" height="3" fill="#fff"/>
<!-- gear -->
<circle cx="583" cy="1054.500" r="9" fill="none" stroke="#fff" stroke-width="4" stroke-dasharray="3.600 3.470"/><circle cx="583" cy="1054.500" r="7" fill="none" stroke="#fff" stroke-width="3"/>
<!-- store -->
<path d="M639 1046V1042H652V1046" fill="none" stroke="#26a0da" stroke-width="1.800"/>
<path d="M631 1046H660V1067Q660 1070 657 1070H634Q631 1070 631 1067Z" fill="#f4f4f4"/>
<rect x="640" y="1051" width="5" height="5.500" fill="#f25022"/><rect x="646" y="1051" width="5" height="5.500" fill="#7fba00"/><rect x="640" y="1057.500" width="5" height="5.500" fill="#00a4ef"/><rect x="646" y="1057.500" width="5" height="5.500" fill="#ffb900"/>
<!-- edge -->
<circle cx="708" cy="1055" r="15" fill="url(#edge)"/>
<path d="M708 1040A15 15 0 0 1 723 1055C723 1059 718 1061 714 1060C716 1056 714 1049 706 1049C700 1049 696 1052 694 1056C694 1048 700 1040 708 1040Z" fill="#58c8a0"/>
<path d="M702 1056C706 1052 712 1053 712 1057C709 1058 705 1062 711 1064C714 1065 717 1064 719 1063C715 1069 707 1071 703 1067C699 1063 699 1059 702 1056Z" fill="#1b1b1b"/>
<!-- chrome -->
<circle cx="770.500" cy="1054.500" r="15" fill="#e94235"/>
<path d="M770.500 1054.500L757.500 1047A15 15 0 0 0 770.500 1069.500Z" fill="#34a853"/>
<path d="M770.500 1054.500L770.500 1069.500A15 15 0 0 0 783.500 1047Z" fill="#fbbc05"/>
<circle cx="770.500" cy="1054.500" r="7" fill="#fff"/><circle cx="770.500" cy="1054.500" r="5.500" fill="#4285f4"/>
<rect x="745" y="1077" width="51" height="3" fill="#aaa"/>
<!-- telegram -->
<circle cx="831.500" cy="1055" r="14" fill="#2a8fd6"/><path d="M823 1054L840 1047L837 1063L831.500 1059L829 1062V1057Z" fill="#fff"/>
<!-- whatsapp -->
<path d="M894 1041.500A13.500 13.500 0 1 1 887 1066.500L880.500 1068.500L882.500 1062A13.500 13.500 0 0 1 894 1041.500Z" fill="none" stroke="#25d366" stroke-width="2.500"/>
<path d="M889 1048C887 1050 888 1054 891 1058C895 1062 899 1062 901 1060L898 1056.500L896 1058C894 1057 892 1055 891 1052.500L892.500 1051Z" fill="#25d366"/>
<!-- spotify -->
<circle cx="956.500" cy="1055" r="13.500" fill="#1ed760"/><path d="M949 1050C954 1048.500 960 1049 965 1051.500M950 1055C954 1054 959 1054.500 963 1056.500M951 1059.500C954 1058.800 958 1059 961 1061" fill="none" stroke="#1b1b1b" stroke-width="1.700" stroke-linecap="round"/>
<!-- folder -->
<path d="M1004 1043H1016L1019 1046H1032V1066H1004Z" fill="#f7c74f"/><path d="M1004 1043H1016L1019 1047H1004Z" fill="#dd9a2c"/>
<path d="M1012 1066V1056H1024V1066H1021V1059H1015V1066Z" fill="#2b88d8"/>
<!-- excel -->
<rect x="1050" y="1030" width="61" height="50" fill="#333"/><rect x="1050" y="1077" width="61" height="3" fill="#bbb"/>
<rect x="1070" y="1042" width="22" height="24" rx="2" fill="#107c41"/><rect x="1070" y="1042" width="22" height="8" fill="#8fd16f"/><rect x="1081" y="1050" width="11" height="8" fill="#0d6b38"/><rect x="1065" y="1053" width="13" height="13" rx="1" fill="#0b5d2e"/>
<text x="1068" y="1063.500" font-size="12" font-weight="bold" style="fill:#fff">x</text>
<!-- weather -->
<circle cx="1391.500" cy="1055" r="12.500" fill="url(#sun)"/>
<text x="1416" y="1061.500" font-size="16.500" style="fill:#f0f0f0" textLength="37" lengthAdjust="spacingAndGlyphs">20°C</text>
<text x="1465" y="1061.500" font-size="16.500" direction="rtl" style="font-family:'DejaVu Sans',sans-serif;fill:#f0f0f0" dx="55">مشمس</text>
<path d="M1552 1060L1560 1051L1568 1060" fill="none" stroke="#eee" stroke-width="1.200"/>
<path d="M1585 1064C1578 1062 1579 1054 1585 1054C1587 1049 1596 1050 1596 1056" fill="#ccc"/><circle cx="1594" cy="1059.500" r="6" fill="#1e74c4"/><text x="1592.500" y="1063.500" font-size="9" style="fill:#fff">i</text>
<rect x="1615" y="1048" width="10" height="13" rx="2" fill="none" stroke="#eee" stroke-width="1.200"/><path d="M1625 1052L1629 1050V1059L1625 1057M1614 1045H1624M1614 1064H1624" fill="none" stroke="#eee"/>
<rect x="1642" y="1047" width="17" height="12" fill="none" stroke="#eee" stroke-width="1.200"/><rect x="1644" y="1049" width="8" height="8" fill="#eee"/><circle cx="1655" cy="1060" r="5.500" fill="#107c41"/>
<path d="M1674 1064A16 16 0 0 1 1689 1049M1678 1064A11 11 0 0 1 1689 1054M1682 1064A7 7 0 0 1 1689 1058" fill="none" stroke="#ddd" stroke-width="1.200"/><circle cx="1687" cy="1063" r="1.500" fill="#ddd"/>
<path d="M1700 1051H1704L1710 1046V1064L1704 1059H1700ZM1713 1051C1715 1053 1715 1057 1713 1059M1716 1048C1720 1052 1720 1058 1716 1062" fill="none" stroke="#ddd" stroke-width="1.200"/>
<text x="1733.500" y="1061" font-size="14" style="fill:#eee" textLength="28.500" lengthAdjust="spacingAndGlyphs">ENG</text>
<text x="1787" y="1049.500" font-size="14.500" style="fill:#eee" textLength="50.500" lengthAdjust="spacingAndGlyphs">3:32 PM</text>
<text x="1778.500" y="1072.500" font-size="14.500" style="fill:#eee" textLength="67.500" lengthAdjust="spacingAndGlyphs">3/16/2026</text>
<rect x="1854" y="1030" width="46" height="50" fill="#262626"/>
<path d="M1871 1045.500H1889V1062H1882L1879 1066V1062H1871Z" fill="none" stroke="#eee" stroke-width="1.200"/><path d="M1886 1059C1884 1062 1881 1063 1881 1065" fill="none" stroke="#eee"/>

<!-- WATERMARK -->
<text x="845" y="1008" font-size="76" font-weight="bold" style="font-family:'DejaVu Sans',sans-serif;fill:rgba(128,128,128,.15)" textLength="230" lengthAdjust="spacingAndGlyphs">مستقل</text>
<text x="847" y="1050" font-size="37" font-weight="bold" style="fill:rgba(150,150,150,.3)" textLength="228" lengthAdjust="spacingAndGlyphs">mostaql.com</text>
</svg>
</body></html>
